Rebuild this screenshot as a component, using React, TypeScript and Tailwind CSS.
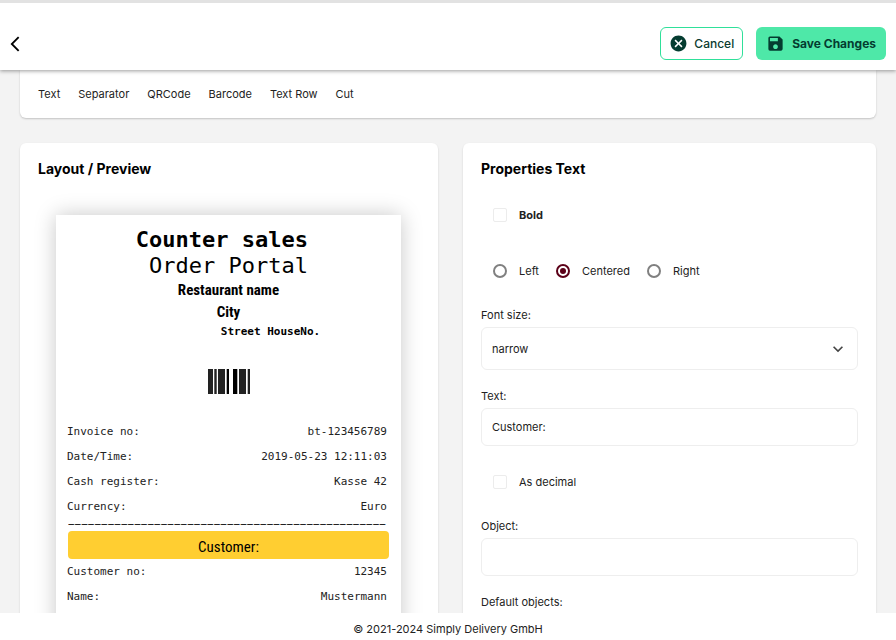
import React, { useState } from 'react';
import { MdArrowBackIosNew, MdCancel, MdKeyboardArrowDown, MdSave } from 'react-icons/md';

const elements = ['Text', 'Separator', 'QRCode', 'Barcode', 'Text Row', 'Cut'];

const invoiceRows = [
  { label: 'Invoice no:', value: 'bt-123456789' },
  { label: 'Date/Time:', value: '2019-05-23 12:11:03' },
  { label: 'Cash register:', value: 'Kasse 42' },
  { label: 'Currency:', value: 'Euro' },
];

const customerRows = [
  { label: 'Customer no:', value: '12345' },
  { label: 'Name:', value: 'Mustermann' },
];

interface ReceiptRowProps {
  label: string;
  value: string;
}

const ReceiptRow: React.FC<ReceiptRowProps> = ({ label, value }) => (
  <div className="mr-[2px] -ml-px flex h-[25px] items-center justify-between">
    <span>{label}</span>
    <span>{value}</span>
  </div>
);

const Barcode: React.FC = () => (
  <svg className="mx-auto h-[25px] w-[42px]" viewBox="0 0 42 25" fill="#222" aria-label="Barcode">
    <rect x="0" width="5" height="25" />
    <rect x="6.3" width="2.4" height="25" />
    <rect x="10" width="7" height="25" />
    <rect x="18.7" width="2.3" height="25" fill="#000" />
    <rect x="25" width="4.3" height="25" fill="#000" />
    <rect x="31" width="7" height="25" />
    <rect x="39.7" width="2.3" height="25" />
  </svg>
);

interface CheckFieldProps {
  id: string;
  label: string;
  bold?: boolean;
  checked: boolean;
  onChange: (checked: boolean) => void;
}

const CheckField: React.FC<CheckFieldProps> = ({ id, label, bold, checked, onChange }) => (
  <div className="flex h-5 items-center gap-3 pl-3">
    <input
      id={id}
      type="checkbox"
      checked={checked}
      onChange={(e) => onChange(e.target.checked)}
      className="size-[14px] appearance-none rounded-[2px] border border-[#ececec] bg-white checked:bg-[#5b0018]"
    />
    <label htmlFor={id} className={bold ? 'font-bold' : ''}>
      {label}
    </label>
  </div>
);

interface TextFieldProps {
  id: string;
  label: string;
  value: string;
  onChange: (value: string) => void;
}

const TextField: React.FC<TextFieldProps> = ({ id, label, value, onChange }) => (
  <div className="flex flex-col gap-1">
    <label htmlFor={id}>{label}</label>
    <input
      id={id}
      type="text"
      value={value}
      onChange={(e) => onChange(e.target.value)}
      className="h-[38px] w-full rounded-md border border-[#eeeeee] bg-white px-[10px] outline-none"
    />
  </div>
);

const App: React.FC = () => {
  const [bold, setBold] = useState(false);
  const [decimal, setDecimal] = useState(false);
  const [align, setAlign] = useState('Centered');
  const [fontSize, setFontSize] = useState('narrow');
  const [text, setText] = useState('Customer:');
  const [object, setObject] = useState('');

  return (
    <div className="flex h-screen flex-col bg-[#f3f3f3] font-['Inter',sans-serif] text-[11px] leading-4 text-[#222]">
      <header className="relative z-10 flex shrink-0 items-center justify-between border-t-3 border-[#e2e2e2] bg-white pt-6 pr-[10px] pb-[10px] pl-[6px] shadow-[0_1px_4px_rgba(0,0,0,0.4)]">
        <button type="button" aria-label="Back" className="text-black">
          <MdArrowBackIosNew className="size-[18px]" />
        </button>
        <div className="flex gap-[13px]">
          <button
            type="button"
            className="flex h-[33px] items-center gap-[6px] rounded-md border border-[#2fe09a] bg-white px-2 text-xs font-medium text-[#0b3b30]"
          >
            <MdCancel className="size-[19px] text-[#043c30]" />
            Cancel
          </button>
          <button
            type="button"
            className="flex h-[33px] items-center gap-[7px] rounded-md bg-[#4ee8a8] px-[10px] text-xs font-bold text-[#043c30]"
          >
            <MdSave className="size-[19px]" />
            Save Changes
          </button>
        </div>
      </header>

      <main className="min-h-0 flex-1 overflow-hidden px-5">
        <div className="flex gap-[18px] rounded-b-md bg-white px-[18px] py-4 shadow-[0_1px_2px_rgba(0,0,0,0.2)]">
          {elements.map((name) => (
            <button key={name} type="button">
              {name}
            </button>
          ))}
        </div>

        <div className="mt-[25px] grid grid-cols-[418fr_413fr] gap-[25px]">
          <section className="overflow-hidden rounded-md bg-white px-[18px] pt-4 shadow-[0_1px_2px_rgba(0,0,0,0.15)]">
            <h2 className="text-sm leading-5 font-bold text-black">Layout / Preview</h2>
            <div className="mt-9 mr-[19px] ml-[18px] bg-white px-3 pt-3 pb-10 font-['DejaVu_Sans_Mono',monospace] shadow-[0_0_20px_rgba(0,0,0,0.22)]">
              <div className="text-center text-black">
                <p className="text-[22px] leading-[26px] font-bold whitespace-pre">{'Counter sales '}</p>
                <p className="text-[22px] leading-[26px]">Order Portal</p>
                <p className="font-['Roboto_Condensed','Liberation_Sans',sans-serif] text-[15px] leading-[22px] font-bold">
                  Restaurant name
                </p>
                <p className="font-['Roboto_Condensed','Liberation_Sans',sans-serif] text-[15px] leading-[22px] font-bold">
                  City
                </p>
                <p className="pl-[84px] leading-[18px] font-bold">Street HouseNo.</p>
              </div>
              <div className="pt-7 pb-[25px]">
                <Barcode />
              </div>
              {invoiceRows.map((row) => (
                <ReceiptRow key={row.label} label={row.label} value={row.value} />
              ))}
              <div className="h-3 overflow-hidden leading-3 whitespace-nowrap">{'−'.repeat(48)}</div>
              <div className="h-[28px] rounded bg-[#ffce31] text-center font-['Roboto_Condensed','Liberation_Sans',sans-serif] text-[15px] leading-[32px] text-black">
                {text}
              </div>
              {customerRows.map((row) => (
                <ReceiptRow key={row.label} label={row.label} value={row.value} />
              ))}
            </div>
          </section>

          <section className="rounded-md bg-white px-[18px] pt-4 pb-10 shadow-[0_1px_2px_rgba(0,0,0,0.15)]">
            <h2 className="text-sm leading-5 font-bold text-black">Properties Text</h2>
            <div className="mt-[26px]">
              <CheckField id="bold" label="Bold" bold checked={bold} onChange={setBold} />
            </div>
            <div className="mt-9 flex h-5 items-center gap-[17px] pl-3">
              {['Left', 'Centered', 'Right'].map((name) => (
                <label key={name} className="flex items-center gap-3">
                  <input
                    type="radio"
                    name="align"
                    value={name}
                    checked={align === name}
                    onChange={() => setAlign(name)}
                    className="size-[14px] appearance-none rounded-full border-2 border-[#808080] bg-white bg-clip-content p-[2px] checked:border-[#5b0018] checked:bg-[#5b0018]"
                  />
                  {name}
                </label>
              ))}
            </div>
            <div className="mt-[26px] flex flex-col gap-1">
              <label htmlFor="font-size">Font size:</label>
              <div className="relative">
                <select
                  id="font-size"
                  value={fontSize}
                  onChange={(e) => setFontSize(e.target.value)}
                  className="h-[43px] w-full appearance-none rounded-md border border-[#eeeeee] bg-white px-[10px] outline-none"
                >
                  <option>narrow</option>
                  <option>normal</option>
                  <option>large</option>
                </select>
                <MdKeyboardArrowDown className="pointer-events-none absolute top-3 right-[10px] size-5 text-[#444]" />
              </div>
            </div>
            <div className="mt-[18px]">
              <TextField id="text" label="Text:" value={text} onChange={setText} />
            </div>
            <div className="mt-[26px]">
              <CheckField id="decimal" label="As decimal" checked={decimal} onChange={setDecimal} />
            </div>
            <div className="mt-[26px]">
              <TextField id="object" label="Object:" value={object} onChange={setObject} />
            </div>
            <p className="mt-[18px]">Default objects:</p>
          </section>
        </div>
      </main>

      <footer className="relative z-10 shrink-0 bg-white pt-2 pb-[3px] text-center">© 2021-2024 Simply Delivery GmbH</footer>
    </div>
  );
};

export default App;
